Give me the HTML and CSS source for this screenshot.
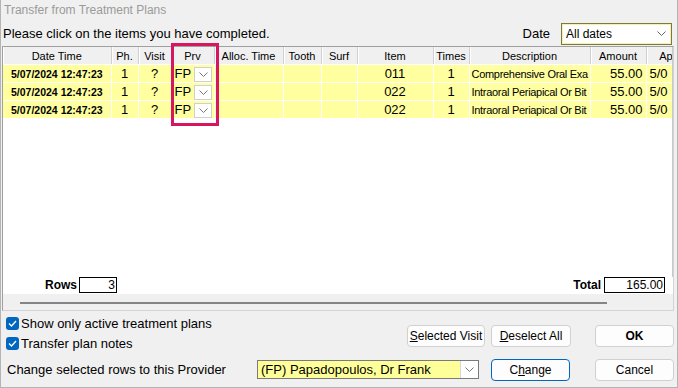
FILE: index.html
```html
<!DOCTYPE html>
<html lang="en">
<head>
    <meta charset="UTF-8">
    <title>Transfer from Treatment Plans</title>
    <link rel="stylesheet" href="styles.css">
</head>
<body>

<div class="window">
    <!-- Title bar -->
    <div class="titlebar">Transfer from Treatment Plans</div>

    <!-- Instruction and date filter -->
    <div class="toolbar">
        <span class="hint">Please click on the items you have completed.</span>
        <span class="date-label">Date</span>
        <div class="date-select">
            <span>All dates</span>
            <svg class="chev" width="9" height="5" viewBox="0 0 9 5"><polyline points="0.5,0.5 4.5,4.5 8.5,0.5" fill="none" stroke="#666" stroke-width="1"/></svg>
        </div>
    </div>

    <!-- Items grid -->
    <div class="grid">
        <div class="grid-body">
            <table class="items">
                <colgroup>
                    <col style="width:108px"><col style="width:27px"><col style="width:33px"><col style="width:43px">
                    <col style="width:69px"><col style="width:38px"><col style="width:36px"><col style="width:76px">
                    <col style="width:36px"><col style="width:121px"><col style="width:56px"><col style="width:40px">
                </colgroup>
                <thead>
                    <tr>
                        <th>Date Time</th><th>Ph.</th><th>Visit</th><th>Prv</th><th>Alloc. Time</th><th>Tooth</th>
                        <th>Surf</th><th>Item</th><th>Times</th><th>Description</th><th>Amount</th><th>Ap</th>
                    </tr>
                </thead>
                <tbody>
                    <tr>
                        <td class="date">5/07/2024 12:47:23</td><td class="c">1</td><td class="c">?</td>
                        <td class="prv"><span>FP</span><span class="mini-drop"><svg width="9" height="5" viewBox="0 0 9 5"><polyline points="0.5,0.5 4.5,4.5 8.5,0.5" fill="none" stroke="#777" stroke-width="1"/></svg></span></td>
                        <td></td><td></td><td></td><td class="c">011</td><td class="c">1</td>
                        <td class="desc">Comprehensive Oral Exa</td><td class="r">55.00</td><td class="ap">5/0</td>
                    </tr>
                    <tr>
                        <td class="date">5/07/2024 12:47:23</td><td class="c">1</td><td class="c">?</td>
                        <td class="prv"><span>FP</span><span class="mini-drop"><svg width="9" height="5" viewBox="0 0 9 5"><polyline points="0.5,0.5 4.5,4.5 8.5,0.5" fill="none" stroke="#777" stroke-width="1"/></svg></span></td>
                        <td></td><td></td><td></td><td class="c">022</td><td class="c">1</td>
                        <td class="desc">Intraoral Periapical Or Bit</td><td class="r">55.00</td><td class="ap">5/0</td>
                    </tr>
                    <tr>
                        <td class="date">5/07/2024 12:47:23</td><td class="c">1</td><td class="c">?</td>
                        <td class="prv"><span>FP</span><span class="mini-drop"><svg width="9" height="5" viewBox="0 0 9 5"><polyline points="0.5,0.5 4.5,4.5 8.5,0.5" fill="none" stroke="#777" stroke-width="1"/></svg></span></td>
                        <td></td><td></td><td></td><td class="c">022</td><td class="c">1</td>
                        <td class="desc">Intraoral Periapical Or Bit</td><td class="r">55.00</td><td class="ap">5/0</td>
                    </tr>
                </tbody>
            </table>
        </div>
        <div class="grid-foot">
            <span class="foot-label rows-label">Rows</span>
            <span class="foot-box rows-box">3</span>
            <span class="foot-label total-label">Total</span>
            <span class="foot-box total-box">165.00</span>
        </div>
        <div class="hscroll"><div class="hscroll-thumb"></div></div>
    </div>

    <!-- Annotation around the provider column -->
    <div class="highlight"></div>

    <!-- Options and buttons -->
    <div class="options">
        <div class="checks">
            <label class="check"><span class="box"><svg width="9" height="7" viewBox="0 0 9 7"><polyline points="1,3.5 3.5,6 8,1" fill="none" stroke="#fff" stroke-width="1.3"/></svg></span>Show only active treatment plans</label>
            <label class="check"><span class="box"><svg width="9" height="7" viewBox="0 0 9 7"><polyline points="1,3.5 3.5,6 8,1" fill="none" stroke="#fff" stroke-width="1.3"/></svg></span>Transfer plan notes</label>
        </div>
        <button class="btn w78"><u>S</u>elected Visit</button>
        <button class="btn w80 gap6"><u>D</u>eselect All</button>
        <button class="btn w79 gap24 bold">OK</button>
    </div>

    <div class="provider-row">
        <span class="provider-label">Change selected rows to this Provider</span>
        <div class="provider-select">
            <span class="provider-text">(FP) Papadopoulos, Dr Frank</span>
            <span class="provider-drop"><svg width="9" height="5" viewBox="0 0 9 5"><polyline points="0.5,0.5 4.5,4.5 8.5,0.5" fill="none" stroke="#777" stroke-width="1"/></svg></span>
        </div>
        <button class="btn w79 gap12 focused">C<u>h</u>ange</button>
        <button class="btn w79 gap25">Cancel</button>
    </div>
</div>

</body>
</html>
```

FILE: styles.css
```css
/* Page and window frame */
body {
    margin: 0;
    background-color: #ffffff;
    font-family: "Liberation Sans", Arial, sans-serif;
}

.window {
    position: relative;
    width: 678px;
    height: 388px;
    box-sizing: border-box;
    border: 1px solid #b4b4b4;
    border-top: none;
    background-color: #f0f0f0;
    color: #000;
    display: flex;
    flex-direction: column;
}

.titlebar {
    height: 21px;
    line-height: 20px;
    padding-left: 3px;
    font-size: 12px;
    color: #9a9a9a;
}

/* Instruction line with date filter */
.toolbar {
    height: 25px;
    display: flex;
    align-items: center;
    padding: 0 5px 0 2px;
}

.hint {
    font-size: 13px;
    flex: 1;
}

.date-label {
    font-size: 13px;
    margin-right: 11px;
}

.date-select {
    width: 111px;
    height: 22px;
    box-sizing: border-box;
    border: 1px solid #7d7a40;
    box-shadow: inset 0 0 0 1px #f6f0a8;
    background-color: #fff;
    display: flex;
    align-items: center;
    justify-content: space-between;
    padding: 0 5px 0 4px;
    font-size: 12px;
}

/* Grid panel */
.grid {
    height: 265px;
    margin: 0 3px 0 1px;
    box-sizing: border-box;
    border: 1px solid #a0a0a0;
    border-right-color: #d4d4d4;
    border-bottom-color: #d4d4d4;
    display: flex;
    flex-direction: column;
    background-color: #fff;
}

.grid-body {
    flex: 1;
    overflow: hidden;
    width: 669px;
    border-right: 1px solid #c8c8c8;
}

.items {
    table-layout: fixed;
    border-collapse: collapse;
    width: 683px;
}

.items th {
    height: 17px;
    padding: 0;
    font-size: 11px;
    font-weight: normal;
    background-color: #f0f0f0;
    border-right: 1px solid #d0d0d0;
    border-bottom: 1px solid #fff;
    box-shadow: inset 1px 0 #fff;
    white-space: nowrap;
    overflow: hidden;
}

.items td {
    height: 17px;
    padding: 0;
    background-color: #ffff9f;
    border-right: 1px solid #fff;
    border-bottom: 1px solid #fff;
    font-size: 13px;
    white-space: nowrap;
    overflow: hidden;
}

.items td.date {
    font-size: 10.5px;
    font-weight: bold;
    padding-left: 8px;
}

.items td.c {
    text-align: center;
}

.items td.r {
    text-align: right;
    padding-right: 3px;
}

.items td.ap {
    padding-left: 3px;
}

.items td.desc {
    font-size: 11px;
    letter-spacing: -0.3px;
    padding-left: 2px;
}

.items td.prv {
    padding-left: 3px;
}

.prv span {
    vertical-align: middle;
}

.mini-drop {
    display: inline-flex;
    align-items: center;
    justify-content: center;
    width: 18px;
    height: 15px;
    margin-left: 3px;
    box-sizing: border-box;
    background-color: #fff;
    border: 1px solid #cfcfcf;
}

/* Grid footer with totals */
.grid-foot {
    height: 17px;
    display: flex;
    align-items: flex-start;
    font-size: 12px;
}

.foot-label {
    font-weight: bold;
    line-height: 16px;
}

.rows-label {
    margin-left: 42px;
    margin-right: 2px;
}

.total-label {
    margin-left: auto;
    margin-right: 3px;
}

.foot-box {
    height: 16px;
    box-sizing: border-box;
    border: 1px solid #000;
    text-align: right;
    padding-right: 1px;
    line-height: 14px;
    font-size: 12px;
}

.rows-box {
    width: 38px;
}

.total-box {
    width: 61px;
    margin-right: 8px;
}

.hscroll {
    height: 16px;
    background-color: #f0f0f0;
    padding: 8px 0 0 17px;
    box-sizing: border-box;
}

.hscroll-thumb {
    width: 587px;
    height: 2px;
    background-color: #858585;
}

/* Red annotation box */
.highlight {
    position: absolute;
    left: 170px;
    top: 43px;
    width: 48px;
    height: 83px;
    box-sizing: border-box;
    border: 3px solid #d6175f;
    pointer-events: none;
}

/* Options area */
.options {
    display: flex;
    align-items: flex-start;
    height: 44px;
    padding-right: 3px;
}

.checks {
    flex: 1;
    display: flex;
    flex-direction: column;
    gap: 7px;
    padding: 6px 0 0 5px;
}

.check {
    display: flex;
    align-items: center;
    height: 13px;
    font-size: 13px;
}

.box {
    width: 13px;
    height: 13px;
    border-radius: 3px;
    background-color: #0067c0;
    display: inline-flex;
    align-items: center;
    justify-content: center;
    margin-right: 2px;
}

.btn {
    height: 22px;
    margin-top: 14px;
    box-sizing: border-box;
    border: 1px solid #d0d0d0;
    border-radius: 4px;
    background-color: #fdfdfd;
    font-family: "Liberation Sans", Arial, sans-serif;
    font-size: 12px;
    color: #000;
    padding: 0;
}

.w78 { width: 78px; }
.w79 { width: 79px; }
.w80 { width: 80px; }
.gap6 { margin-left: 6px; }
.gap12 { margin-left: 12px; }
.gap24 { margin-left: 24px; }
.gap25 { margin-left: 25px; }
.bold { font-weight: bold; }

.btn.focused {
    border-color: #0067c0;
}

/* Provider row */
.provider-row {
    display: flex;
    align-items: center;
    height: 28px;
    padding: 0 3px 0 6px;
}

.provider-row .btn {
    margin-top: 2px;
}

.provider-label {
    width: 250px;
    font-size: 13px;
}

.provider-select {
    width: 222px;
    height: 19px;
    box-sizing: border-box;
    border: 1px solid #7a7a7a;
    background-color: #ffff99;
    display: flex;
    align-items: center;
}

.provider-text {
    flex: 1;
    font-size: 13px;
    padding-left: 3px;
}

.provider-drop {
    width: 17px;
    height: 17px;
    background-color: #fff;
    border-left: 1px solid #d8d8d8;
    display: flex;
    align-items: center;
    justify-content: center;
}
```
